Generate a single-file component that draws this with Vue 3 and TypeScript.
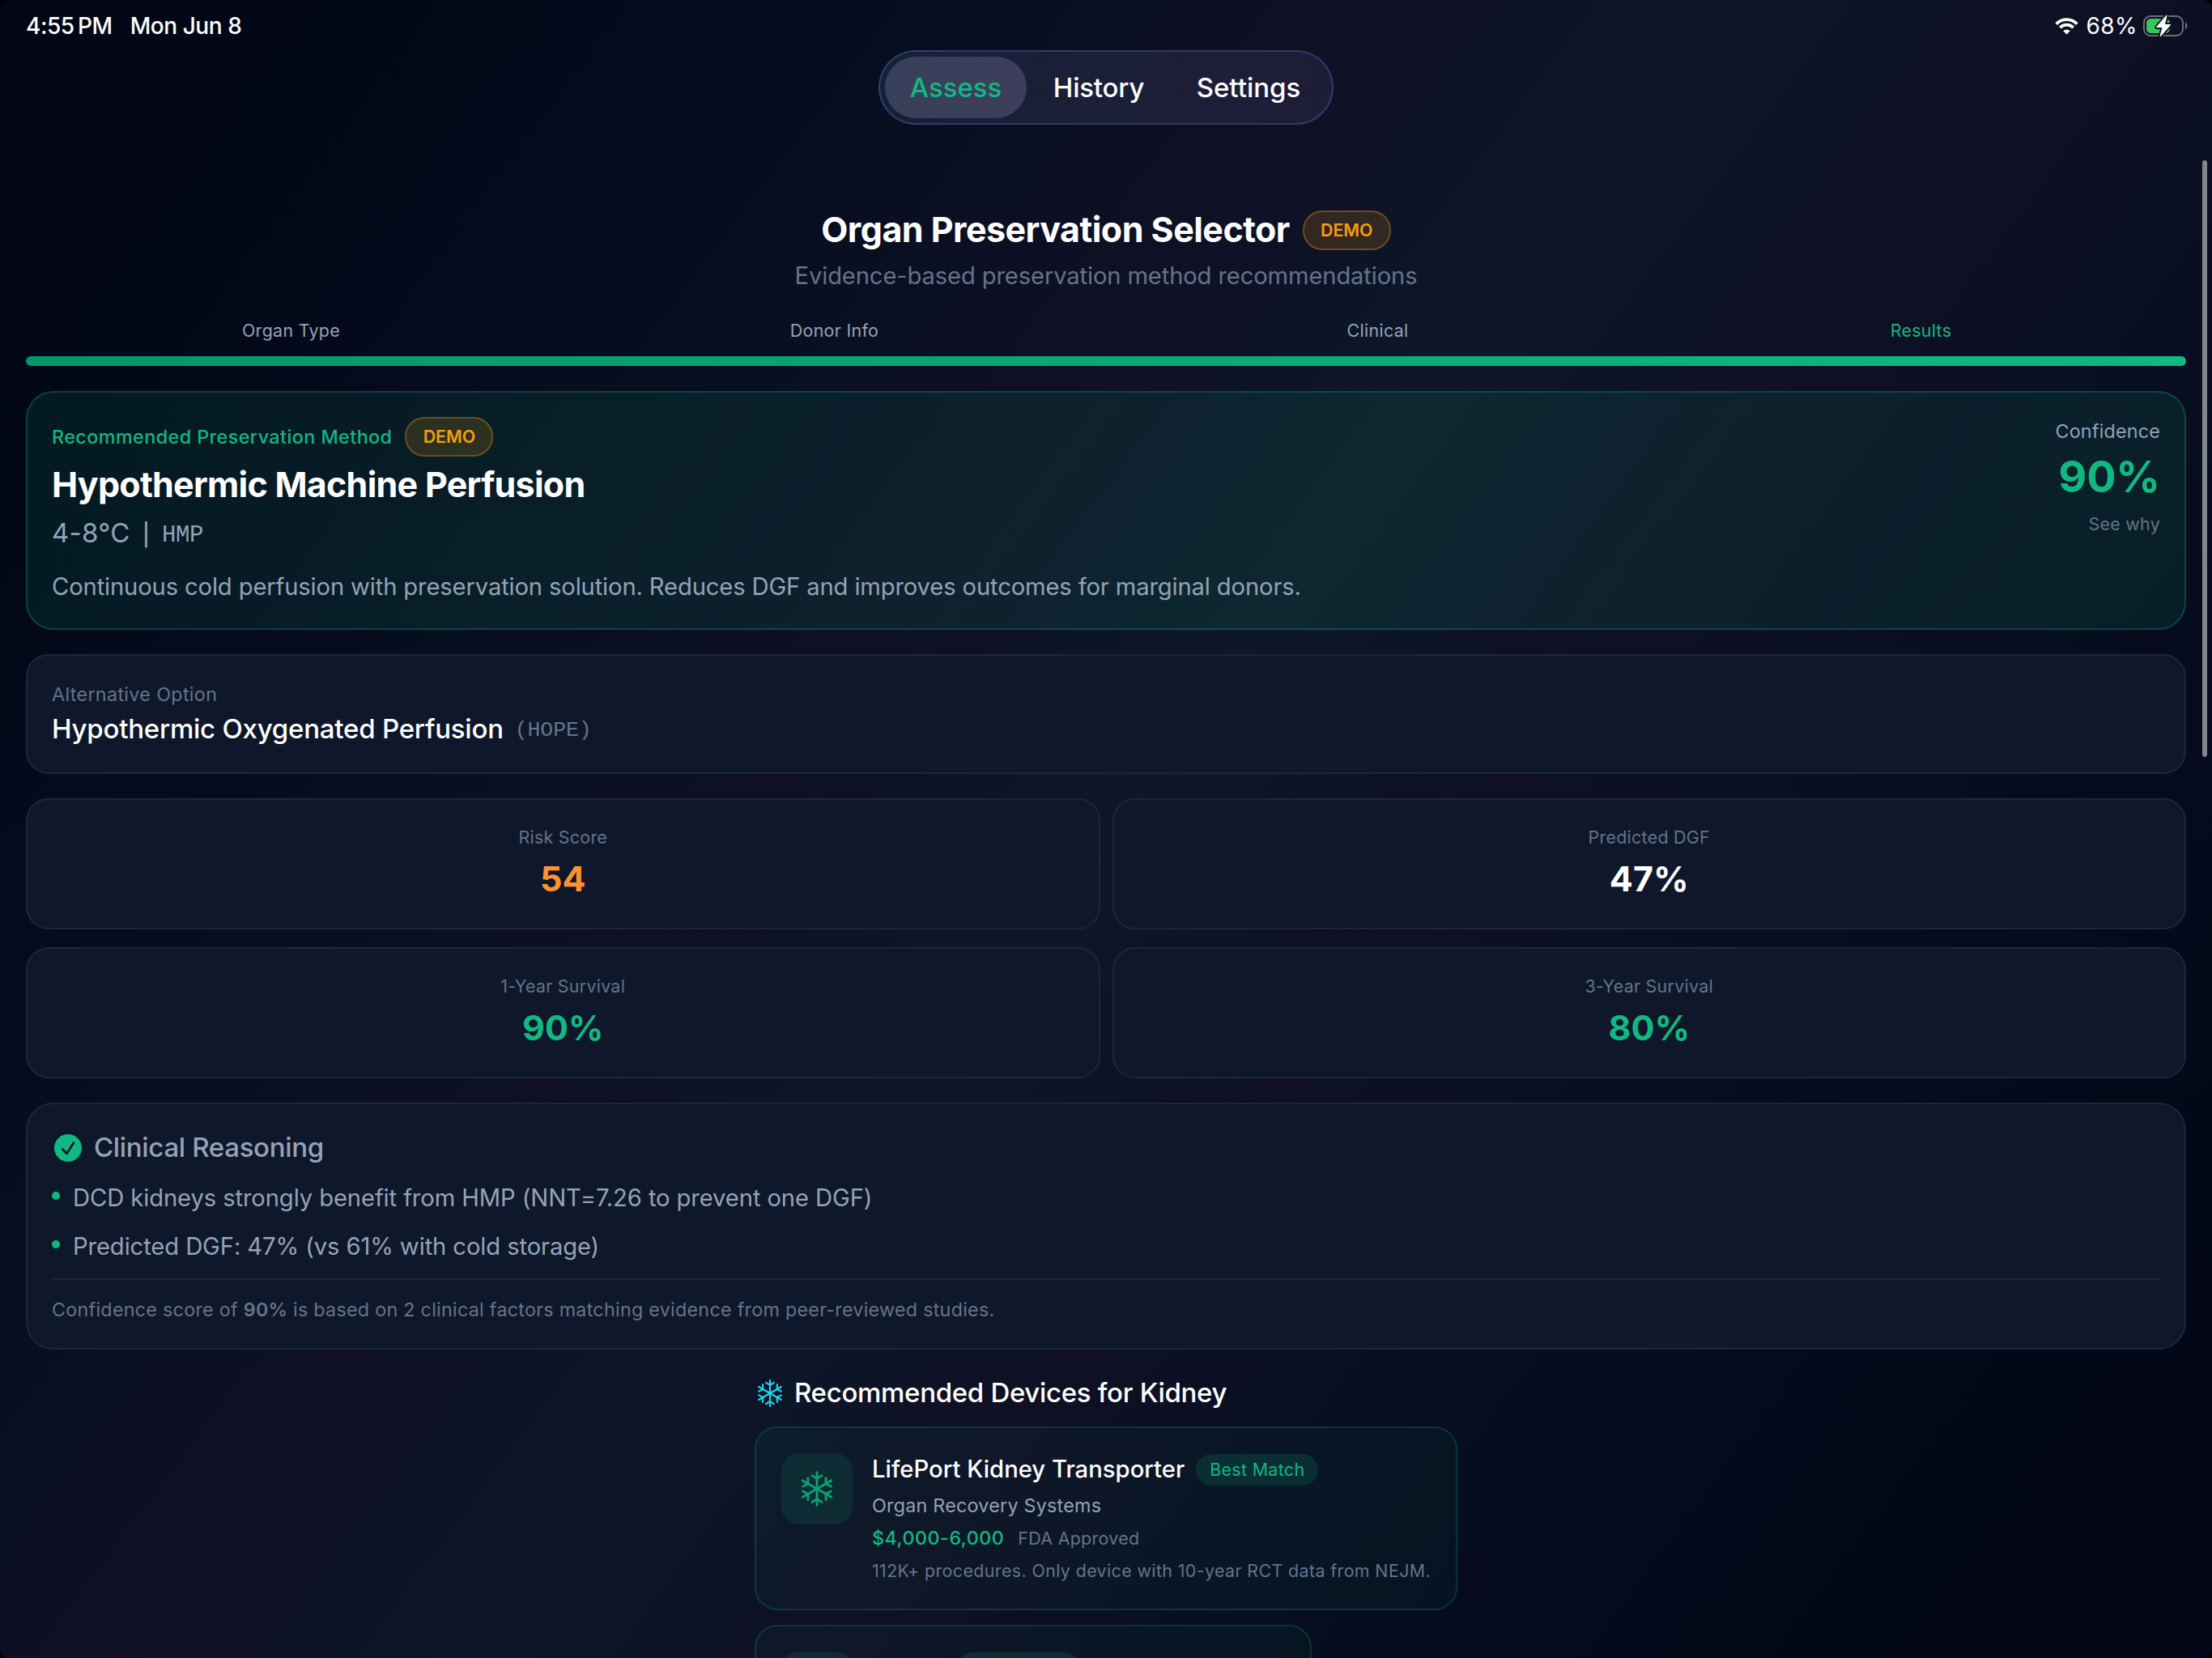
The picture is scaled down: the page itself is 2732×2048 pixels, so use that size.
<script setup lang="ts">
interface Stat {
  label: string
  value: string
  tone: string
}

const tabs: string[] = ['Assess', 'History', 'Settings']
const steps: string[] = ['Organ Type', 'Donor Info', 'Clinical', 'Results']
const stats: Stat[] = [
  { label: 'Risk Score', value: '54', tone: 'orange' },
  { label: 'Predicted DGF', value: '47%', tone: 'white' },
  { label: '1-Year Survival', value: '90%', tone: 'green' },
  { label: '3-Year Survival', value: '80%', tone: 'green' },
]
const reasons: string[] = [
  'DCD kidneys strongly benefit from HMP (NNT=7.26 to prevent one DGF)',
  'Predicted DGF: 47% (vs 61% with cold storage)',
]
const arms: number[] = [0, 60, 120, 180, 240, 300]
</script>

<template>
  <div class="screen">
    <header class="status">
      <div class="status-left">
        <span class="time">4:55&#8201;PM</span>
        <span class="date">Mon Jun 8</span>
      </div>
      <div class="status-right">
        <svg class="wifi" width="29" height="21" viewBox="0 0 29 21">
          <path d="M1.7 7.6A17.5 17.5 0 0 1 27.3 7.6M6.4 12.1A11 11 0 0 1 22.6 12.1" fill="none" stroke="#fff" stroke-width="3.8" />
          <path d="M14.5 20.6L10.2 16.3A6 6 0 0 1 18.8 16.3Z" fill="#fff" />
        </svg>
        <span class="percent">68%</span>
        <svg class="battery" width="56" height="32" viewBox="0 0 56 32">
          <rect x="1" y="4" width="48" height="24" rx="8" fill="none" stroke="#6c6c7b" stroke-width="2" />
          <path d="M52 11.5a5.2 5.2 0 0 1 0 9z" fill="#6c6c7b" />
          <rect x="4" y="7" width="29" height="18" rx="5.5" fill="#34c759" />
          <path d="M29 3.2L16.8 17.5H24.2L21.2 28.6L33.5 14.6H26.2Z" fill="#0e1024" stroke="#0e1024" stroke-width="5" stroke-linejoin="round" />
          <path d="M29 3.2L16.8 17.5H24.2L21.2 28.6L33.5 14.6H26.2Z" fill="#fff" stroke="#fff" stroke-width="1.2" stroke-linejoin="round" />
        </svg>
      </div>
    </header>

    <nav class="tabs">
      <span v-for="(tab, i) in tabs" :key="tab" class="tab" :class="{ active: i === 0 }">{{ tab }}</span>
    </nav>

    <main class="content">
      <div class="title-row">
        <h1 class="title">Organ Preservation Selector</h1>
        <span class="demo">DEMO</span>
      </div>
      <p class="subtitle">Evidence-based preservation method recommendations</p>

      <div class="steps">
        <span v-for="(step, i) in steps" :key="step" class="step" :class="{ current: i === 3 }">{{ step }}</span>
      </div>
      <div class="progress"></div>

      <section class="method">
        <div class="method-main">
          <div class="method-tag">
            <span class="method-label">Recommended Preservation Method</span>
            <span class="demo">DEMO</span>
          </div>
          <h2 class="method-name">Hypothermic Machine Perfusion</h2>
          <div class="method-temp">
            <span class="temp">4-8°C</span>
            <span class="bar">|</span>
            <span class="mono">HMP</span>
          </div>
          <p class="method-desc">Continuous cold perfusion with preservation solution. Reduces DGF and improves outcomes for marginal donors.</p>
        </div>
        <div class="confidence">
          <span class="conf-label">Confidence</span>
          <span class="conf-value">90%</span>
          <span class="conf-why">See why</span>
        </div>
      </section>

      <section class="card alternative">
        <span class="alt-label">Alternative Option</span>
        <div class="alt-row">
          <span class="alt-name">Hypothermic Oxygenated Perfusion</span>
          <span class="alt-code">(HOPE)</span>
        </div>
      </section>

      <section class="stats">
        <div v-for="stat in stats" :key="stat.label" class="card stat">
          <span class="stat-label">{{ stat.label }}</span>
          <span class="stat-value" :class="stat.tone">{{ stat.value }}</span>
        </div>
      </section>

      <section class="card reasoning">
        <div class="reason-head">
          <svg width="34" height="34" viewBox="0 0 34 34">
            <circle cx="17" cy="17" r="17" fill="#10b981" />
            <path d="M10.2 18.4L15.4 24L24 10.6" fill="none" stroke="#0f172a" stroke-width="2.7" stroke-linecap="round" stroke-linejoin="round" />
          </svg>
          <span>Clinical Reasoning</span>
        </div>
        <ul class="reasons">
          <li v-for="reason in reasons" :key="reason" class="reason">
            <i class="dot"></i><span>{{ reason }}</span>
          </li>
        </ul>
        <p class="note">Confidence score of <b>90%</b> is based on 2 clinical factors matching evidence from peer-reviewed studies.</p>
      </section>

      <section class="devices">
        <div class="devices-head">
          <svg width="34" height="34" viewBox="-17 -17 34 34">
            <g v-for="a in arms" :key="a" :transform="`rotate(${a})`" fill="none" stroke="#22d3ee" stroke-width="2.1" stroke-linecap="round">
              <path d="M0 0V-16M-4.9 -13.2L0 -10L4.9 -13.2" />
            </g>
          </svg>
          <span>Recommended Devices for Kidney</span>
        </div>

        <article class="device">
          <div class="tile">
            <svg width="44" height="44" viewBox="-22 -22 44 44">
              <g v-for="a in arms" :key="a" :transform="`rotate(${a})`" fill="none" stroke="#0f9f72" stroke-width="2.9" stroke-linecap="round">
                <path d="M0 0V-20.4M-6 -16.4L0 -12.6L6 -16.4" />
              </g>
            </svg>
          </div>
          <div class="device-body">
            <div class="device-title">
              <span class="device-name">LifePort Kidney Transporter</span>
              <span class="pill">Best Match</span>
            </div>
            <span class="maker">Organ Recovery Systems</span>
            <div class="price-row">
              <span class="price">$4,000-6,000</span>
              <span class="fda">FDA Approved</span>
            </div>
            <span class="device-note">112K+ procedures. Only device with 10-year RCT data from NEJM.</span>
          </div>
        </article>

        <article class="device second">
          <div class="tile"></div>
          <div class="device-body">
            <div class="device-title">
              <span class="name-space"></span>
              <span class="pill"></span>
            </div>
          </div>
        </article>
      </section>
    </main>
    <div class="scrollbar"></div>
  </div>
</template>

<style>
html,
body {
  margin: 0;
  background: #000;
  overflow: hidden;
}
</style>

<style scoped>
.screen {
  position: relative;
  width: 2732px;
  height: 2048px;
  overflow: hidden;
  box-sizing: border-box;
  border-radius: 12px;
  font-family: Inter, 'Liberation Sans', sans-serif;
  color: #fff;
  white-space: nowrap;
  background: linear-gradient(
    126.86deg,
    #020616 0%,
    #030818 10%,
    #050a1c 20%,
    #070e1f 26.4%,
    #0a0f22 32%,
    #0f1024 39.4%,
    #0e1226 43.5%,
    #0c1628 46.4%,
    #0e1729 50%,
    #0c1628 53.5%,
    #0e1226 56.5%,
    #0f1024 60.6%,
    #0a0f22 68%,
    #070e1f 73.6%,
    #050a1c 80%,
    #030818 90%,
    #020616 100%
  );
}
h1,
h2,
p,
ul {
  margin: 0;
  padding: 0;
}
.status {
  height: 62px;
  padding: 0 28px 0 32px;
  box-sizing: border-box;
  display: flex;
  justify-content: space-between;
  align-items: flex-start;
  font-size: 28px;
  line-height: 64px;
  font-weight: 500;
}
.status-left,
.status-right {
  display: flex;
  align-items: center;
}
.status-left {
  letter-spacing: -0.45px;
}
.date {
  margin-left: 22px;
}
.percent {
  margin: 0 7px 0 10px;
  font-weight: 400;
  letter-spacing: 0.4px;
}
.battery {
  margin-right: 1px;
}
.tabs {
  width: 562px;
  height: 92px;
  margin: 0 auto;
  box-sizing: border-box;
  display: flex;
  border-radius: 46px;
  border: 2px solid transparent;
  padding: 6px;
  background:
    linear-gradient(90deg, #172039, #1b1f38 45%, #1e1d38) padding-box,
    linear-gradient(100deg, #2a4170, #34356d 60%, #393576) border-box;
}
.tab {
  flex: none;
  width: 178px;
  text-align: center;
  font-size: 33px;
  line-height: 76px;
  font-weight: 500;
}
.tab:nth-child(2) {
  letter-spacing: -0.2px;
}
.tab:nth-child(3) {
  width: 192px;
}
.tab.active {
  width: 175px;
  border-radius: 38px;
  background: linear-gradient(90deg, #38405a, #3d3e5b);
  color: #10b981;
}
.content {
  padding: 106px 32px 0;
}
.title-row {
  height: 49px;
  display: flex;
  justify-content: center;
  align-items: center;
  gap: 16px;
}
.title {
  font-size: 43px;
  line-height: 50px;
  height: 54px;
  font-weight: 700;
  letter-spacing: -0.54px;
}
.demo {
  width: 109px;
  height: 49px;
  box-sizing: border-box;
  border-radius: 24px;
  border: 2px solid rgba(245, 158, 11, 0.3);
  background: rgba(245, 158, 11, 0.16);
  color: #f59e0b;
  font-size: 21.4px;
  line-height: 44px;
  font-weight: 600;
  text-align: center;
}
.subtitle {
  margin-top: 12px;
  text-align: center;
  font-size: 29.2px;
  line-height: 40px;
  letter-spacing: -0.14px;
  color: #64748b;
}
.steps {
  margin-top: 33px;
  display: flex;
  gap: 16px;
}
.step {
  flex: 1 1 0;
  text-align: center;
  font-size: 21.4px;
  line-height: 28px;
  letter-spacing: 0.32px;
  color: #94a3b8;
}
.step.current {
  color: #10b981;
}
.progress {
  margin-top: 18px;
  height: 12px;
  border-radius: 6px;
  background: linear-gradient(90deg, #059669, #10b981);
}
.method {
  margin-top: 31px;
  height: 295px;
  box-sizing: border-box;
  padding: 30px;
  border: 2px solid rgba(16, 185, 129, 0.27);
  border-radius: 34px;
  background: rgba(16, 185, 129, 0.1);
  display: flex;
  justify-content: space-between;
}
.method-tag {
  height: 49px;
  display: flex;
  align-items: center;
  gap: 16px;
}
.method-label {
  font-size: 23.3px;
  font-weight: 500;
  letter-spacing: 0.45px;
  color: #10b981;
}
.method-name {
  margin-top: 8px;
  font-size: 43px;
  line-height: 52px;
  font-weight: 700;
  letter-spacing: -0.74px;
}
.method-temp {
  margin-top: 14px;
  height: 40px;
  display: flex;
  align-items: center;
  font-size: 33px;
  line-height: 40px;
  color: #94a3b8;
}
.temp {
  letter-spacing: 0.3px;
}
.bar {
  font-size: 27px;
  font-weight: 500;
  margin: 6px 15px 0 15px;
}
.mono {
  font-family: 'Liberation Mono', monospace;
  font-size: 29px;
  letter-spacing: -0.4px;
  margin-top: 8px;
}
.method-desc {
  margin-top: 29px;
  font-size: 29.2px;
  line-height: 36px;
  letter-spacing: -0.14px;
  color: #94a3b8;
}
.confidence {
  display: flex;
  flex-direction: column;
  align-items: flex-end;
  padding-top: 3px;
}
.conf-label {
  font-size: 23.3px;
  line-height: 30px;
  letter-spacing: 0.2px;
  color: #94a3b8;
}
.conf-value {
  margin-top: 11px;
  font-size: 54px;
  line-height: 60px;
  font-weight: 700;
  letter-spacing: -0.2px;
  color: #10b981;
}
.conf-why {
  margin-top: 14px;
  font-size: 21.4px;
  line-height: 28px;
  letter-spacing: 0.28px;
  color: #64748b;
}
.card {
  box-sizing: border-box;
  border: 2px solid #1c2838;
  border-radius: 28px;
  background: #0f172a;
}
.alternative {
  margin-top: 30px;
  height: 148px;
  padding: 33px 30px 0;
  display: flex;
  flex-direction: column;
}
.alt-label {
  font-size: 23.3px;
  line-height: 30px;
  letter-spacing: 0.34px;
  color: #64748b;
}
.alt-row {
  margin-top: 7px;
  height: 40px;
  display: flex;
  align-items: center;
  gap: 14px;
  line-height: 40px;
}
.alt-name {
  font-size: 33px;
  font-weight: 500;
  letter-spacing: -0.23px;
}
.alt-code {
  margin-top: 4px;
  font-family: 'Liberation Mono', monospace;
  font-size: 26.5px;
  letter-spacing: -0.1px;
  color: #64748b;
}
.stats {
  margin-top: 30px;
  display: grid;
  grid-template-columns: 1fr 1fr;
  gap: 22px 15px;
}
.stat {
  height: 162px;
  padding-top: 32px;
  display: flex;
  flex-direction: column;
  align-items: center;
}
.stat-label {
  font-size: 21.4px;
  line-height: 28px;
  letter-spacing: 0.28px;
  color: #64748b;
}
.stat-value {
  margin-top: 11px;
  font-size: 43px;
  line-height: 52px;
  font-weight: 700;
}
.orange {
  color: #ff9230;
}
.green {
  color: #10b981;
}
.reasoning {
  margin-top: 30px;
  height: 305px;
  padding: 32px 30px 0;
  border-radius: 34px;
}
.reason-head {
  height: 42px;
  display: flex;
  align-items: center;
  font-size: 33px;
  font-weight: 500;
  line-height: 42px;
  letter-spacing: -0.33px;
  color: #94a3b8;
}
.reason-head svg {
  margin: 2px 15px 0 3px;
}
.reasons {
  list-style: none;
  margin-top: 22px;
  padding-bottom: 19px;
  border-bottom: 2px solid #1a2537;
  display: flex;
  flex-direction: column;
  gap: 20px;
}
.reason {
  display: flex;
  font-size: 29.2px;
  line-height: 40px;
  letter-spacing: -0.1px;
  color: #94a3b8;
}
.dot {
  width: 10px;
  height: 10px;
  margin: 12px 16px 0 0;
  border-radius: 50%;
  background: #10b981;
}
.note {
  margin-top: 21px;
  font-size: 23.3px;
  line-height: 32px;
  letter-spacing: 0.27px;
  color: #64748b;
}
.note b {
  font-weight: 600;
}
.devices {
  width: 868px;
  margin: 31px auto 0;
}
.devices-head {
  height: 44px;
  display: flex;
  align-items: center;
  font-size: 33px;
  line-height: 42px;
  font-weight: 500;
  letter-spacing: -0.31px;
}
.devices-head svg {
  margin: 2px 13px 0 2px;
}
.device {
  margin-top: 20px;
  height: 227px;
  box-sizing: border-box;
  padding: 31px;
  border: 2px solid rgba(16, 185, 129, 0.2);
  border-radius: 28px;
  background: rgba(16, 185, 129, 0.045);
  display: flex;
  gap: 24px;
}
.device.second {
  margin-top: 18px;
  width: 688px;
}
.tile {
  flex: none;
  width: 88px;
  height: 88px;
  border-radius: 22px;
  background: rgba(16, 185, 129, 0.12);
  display: flex;
  align-items: center;
  justify-content: center;
}
.device-body {
  padding-top: 1px;
  display: flex;
  flex-direction: column;
}
.device-title {
  height: 39px;
  display: flex;
  align-items: center;
  gap: 14px;
}
.device-name {
  font-size: 29.2px;
  line-height: 38px;
  height: 39px;
  font-weight: 500;
  letter-spacing: 0.03px;
}
.pill {
  width: 151px;
  height: 39px;
  border-radius: 19.5px;
  background: rgba(16, 185, 129, 0.15);
  color: #10b981;
  font-size: 21.4px;
  line-height: 39px;
  letter-spacing: 0.35px;
  text-align: center;
}
.name-space {
  width: 92px;
}
.maker {
  margin-top: 9px;
  font-size: 23.3px;
  line-height: 32px;
  letter-spacing: 0.24px;
  color: #94a3b8;
}
.price-row {
  margin-top: 9px;
  display: flex;
  align-items: center;
  gap: 17px;
  line-height: 30px;
}
.price {
  font-size: 23.3px;
  font-weight: 500;
  letter-spacing: 0.5px;
  color: #10b981;
}
.fda {
  font-size: 21.4px;
  letter-spacing: 0.3px;
  color: #64748b;
}
.device-note {
  margin-top: 11px;
  font-size: 21.4px;
  line-height: 28px;
  letter-spacing: 0.39px;
  color: #64748b;
}
.scrollbar {
  position: absolute;
  top: 198px;
  right: 6px;
  width: 6px;
  height: 737px;
  border-radius: 3px;
  background: #83868f;
}
</style>
